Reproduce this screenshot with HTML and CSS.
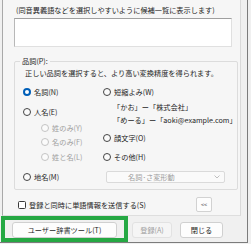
FILE: index.html
```html
<!DOCTYPE html>
<html lang="ja">

<head>
    <meta charset="UTF-8">
    <meta name="viewport" content="width=device-width, initial-scale=1.0">
    <title>単語の登録</title>
    <link rel="stylesheet" href="styles.css">
</head>

<body>

    <div class="window">
        <div class="pane">
            <p class="hint">(同音異義語などを選択しやすいように候補一覧に表示します)</p>
            <div class="entry"></div>

            <fieldset class="group">
                <legend>品詞(P):</legend>
                <p class="desc">正しい品詞を選択すると、より高い変換精度を得られます。</p>

                <div class="options">
                    <div class="col">
                        <div class="opt"><span class="radio on"></span>名詞(N)</div>
                        <div class="opt gap-12"><span class="radio"></span>人名(E)</div>
                        <div class="opt sub gap-8 off"><span class="radio"></span>姓のみ(Y)</div>
                        <div class="opt sub gap-6 off"><span class="radio"></span>名のみ(F)</div>
                        <div class="opt sub gap-7 off"><span class="radio"></span>姓と名(L)</div>
                    </div>
                    <div class="col">
                        <div class="opt"><span class="radio"></span>短縮よみ(W)</div>
                        <div class="example ex-1">「かお」ー「株式会社」</div>
                        <div class="example ex-2">「めーる」ー「aoki@example.com」</div>
                        <div class="opt gap-10"><span class="radio"></span>顔文字(O)</div>
                        <div class="opt gap-11"><span class="radio"></span>その他(H)</div>
                    </div>
                    <div class="opt last"><span class="radio"></span>地名(M)</div>
                    <div class="combo last">
                        <span>名詞･さ変形動</span>
                        <svg width="6" height="4" viewBox="0 0 6 4"><path d="M0.5 0.5 L3 3 L5.5 0.5" fill="none" stroke="#b0b0b0" stroke-width="0.8"/></svg>
                    </div>
                </div>
            </fieldset>

            <div class="send-row">
                <span class="check"></span>
                <span>登録と同時に単語情報を送信する(S)</span>
                <button class="more">&lt;&lt;</button>
            </div>
        </div>

        <div class="footer">
            <div class="highlight">
                <button class="btn tool">ユーザー辞書ツール(T)</button>
            </div>
            <button class="btn disabled">登録(A)</button>
            <button class="btn close">閉じる</button>
        </div>
    </div>

</body>

</html>
```

FILE: styles.css
```css
body {
    margin: 0;
    background-color: #f0f0f0;
    font-family: "Noto Sans CJK JP", "Noto Sans", sans-serif;
    font-size: 7.2px;
    line-height: 8px;
    color: #1e1e1e;
}

p {
    margin: 0;
}

.window {
    width: 248px;
    height: 243px;
    box-sizing: border-box;
    border-right: 1px solid #7c7c7c;
    border-bottom: 1px solid #7c7c7c;
    display: flex;
    flex-direction: column;
}

.pane {
    height: 216px;
    width: 239px;
    margin-left: 2px;
    box-sizing: border-box;
    padding-left: 11px;
    background-color: #f6f6f6;
    border-left: 1px solid #a9a9a9;
    border-right: 1px solid #dadada;
    border-bottom: 1px solid #dedede;
}

.hint {
    margin: 6px 0 0 2px;
    white-space: nowrap;
}

.entry {
    margin-top: 4px;
    width: 218px;
    height: 29px;
    box-sizing: border-box;
    background-color: #fff;
    border: 1px solid #e0e0e0;
    border-top-color: #9f9f9f;
    border-left-color: #b8b8b8;
}

.group {
    margin: 10px 0 0 0;
    width: 220px;
    box-sizing: border-box;
    padding: 0 0 6px 8px;
    border: 1px solid #dcdcdc;
    border-radius: 2px;
}

.group legend {
    margin-left: -3px;
    padding: 0 2px;
}

.desc {
    margin: 4px 0 0 2px;
    white-space: nowrap;
}

.options {
    margin-top: 11px;
    display: grid;
    grid-template-columns: 80px 1fr;
    align-items: start;
}

.col {
    display: flex;
    flex-direction: column;
}

.opt {
    display: flex;
    align-items: center;
    height: 8px;
    white-space: nowrap;
}

.radio {
    width: 8px;
    height: 8px;
    box-sizing: border-box;
    border: 1px solid #444;
    border-radius: 50%;
    background-color: #fbfbfb;
    margin-right: 3px;
    flex-shrink: 0;
}

.radio.on {
    border: 2.5px solid #005fb8;
    background-color: #fff;
}

.off {
    color: #a0a0a0;
}

.off .radio {
    border-color: #c4c4c4;
}

.sub {
    margin-left: 18px;
}

.gap-6 { margin-top: 6px; }
.gap-7 { margin-top: 7px; }
.gap-8 { margin-top: 8px; }
.gap-10 { margin-top: 10px; }
.gap-11 { margin-top: 11px; }
.gap-12 { margin-top: 12px; }

.example {
    margin-left: 10px;
    white-space: nowrap;
}

.ex-1 { margin-top: 7px; }
.ex-2 { margin-top: 5px; }

.last {
    margin-top: 10px;
    align-self: center;
}

.combo {
    margin-left: 3px;
    width: 119px;
    height: 12px;
    box-sizing: border-box;
    padding: 0 4px 0 21px;
    display: flex;
    align-items: center;
    justify-content: space-between;
    background-color: #fafafa;
    border: 1px solid #dadada;
    border-radius: 2px;
    color: #9c9c9c;
}

.send-row {
    margin-top: 7px;
    padding-left: 4px;
    padding-right: 28px;
    height: 15px;
    display: flex;
    align-items: center;
    white-space: nowrap;
}

.check {
    width: 8px;
    height: 8px;
    box-sizing: border-box;
    border: 1px solid #3a3a3a;
    border-radius: 1.5px;
    background-color: #fff;
    margin-right: 3px;
}

.more {
    margin-left: auto;
    width: 16px;
    height: 15px;
    padding: 0;
    font-family: inherit;
    font-size: 5.5px;
    color: #666;
    background-color: #fdfdfd;
    border: 1px solid #d2d2d2;
    border-radius: 2px;
}

.footer {
    flex: 1;
    display: flex;
    align-items: flex-start;
}

.highlight {
    margin-left: 1px;
    width: 127px;
    height: 26px;
    box-sizing: border-box;
    border: 4px solid #25a843;
    padding: 2px 0 0 7px;
}

.btn {
    height: 16px;
    padding: 0;
    font-family: inherit;
    font-size: 7.2px;
    color: #1e1e1e;
    background-color: #fdfdfd;
    border: 1px solid #d0d0d0;
    border-radius: 3px;
}

.tool {
    width: 105px;
}

.disabled {
    margin: 6px 0 0 4px;
    width: 40px;
    color: #a0a0a0;
    background-color: #f5f5f5;
    border-color: #e2e2e2;
}

.close {
    margin: 6px 0 0 8px;
    width: 43px;
}
```
